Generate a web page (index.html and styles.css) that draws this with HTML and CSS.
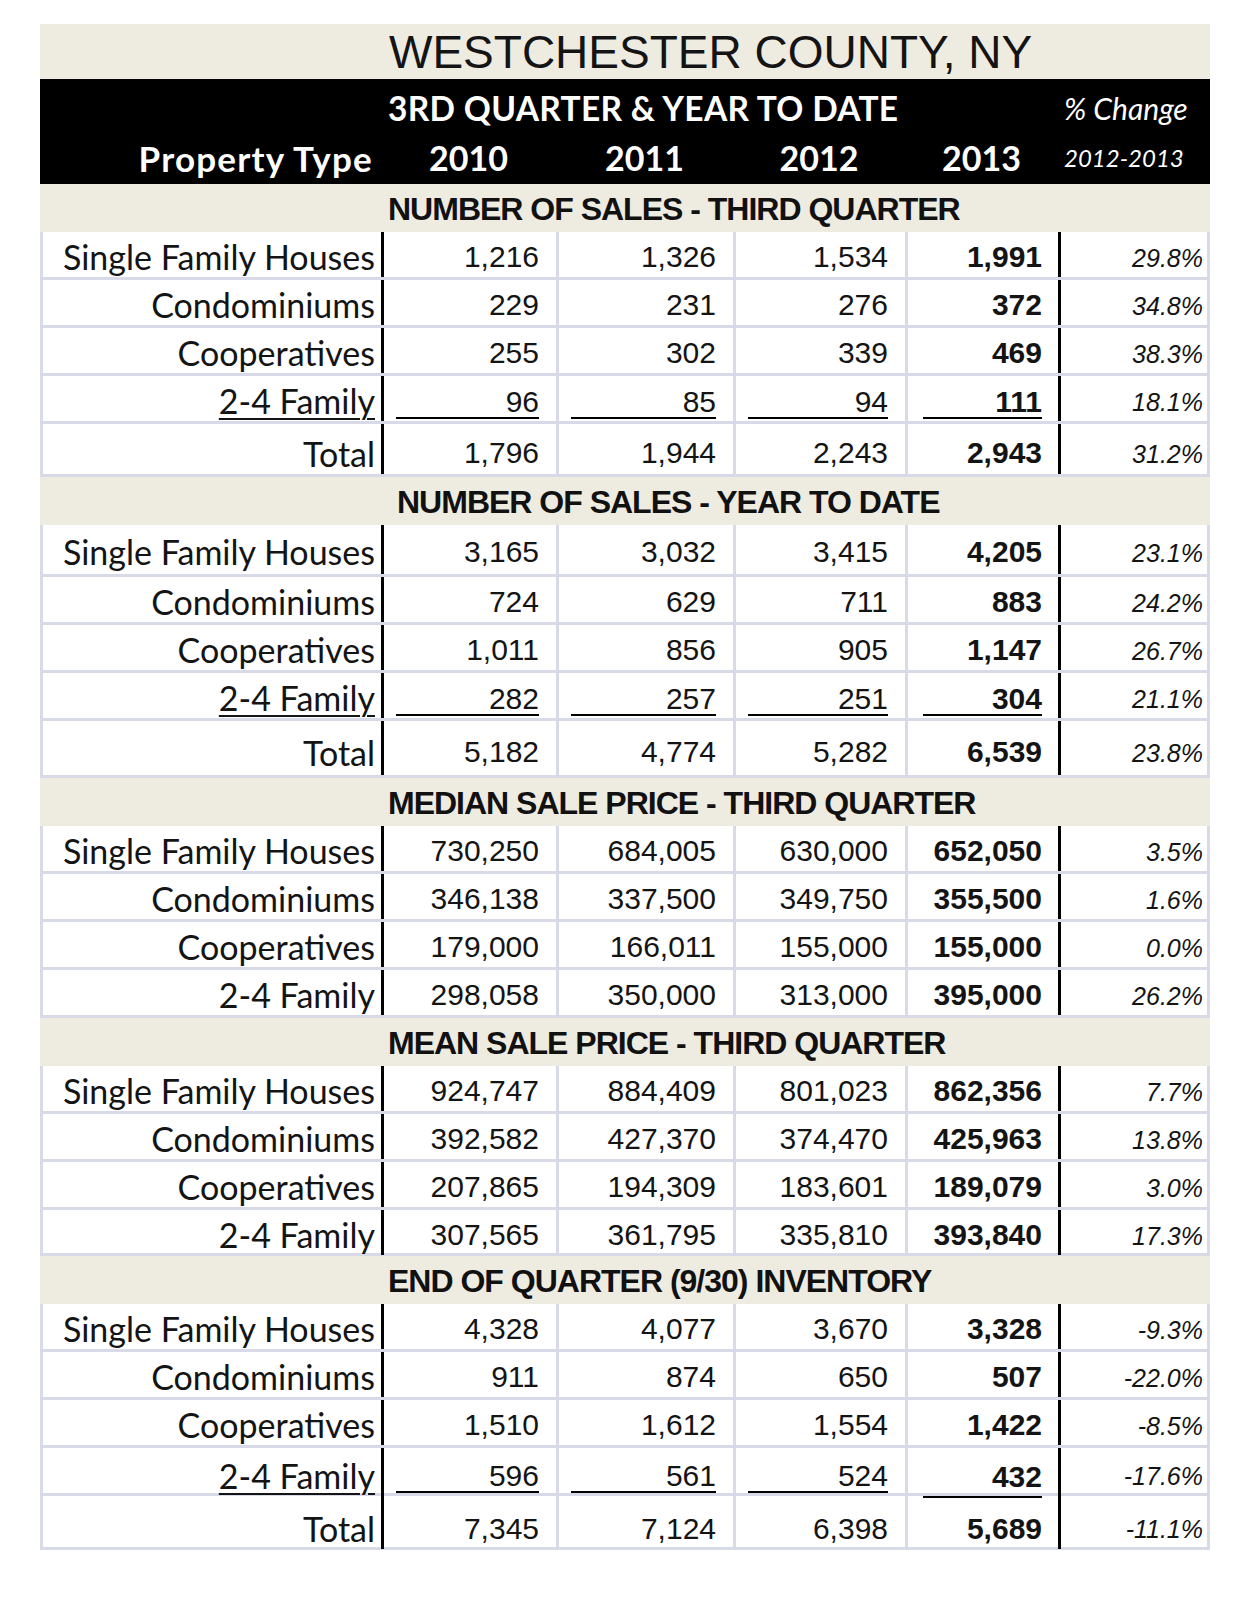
FILE: index.html
```html
<!DOCTYPE html>
<html>
<head>
<meta charset="utf-8">
<link rel="stylesheet" href="styles.css">
</head>
<body>
<div class="sheet">
  <div class="title-row grid"><div class="title">WESTCHESTER COUNTY, NY</div></div>
  <div class="head grid">
    <div class="h-span">3RD QUARTER &amp; YEAR TO DATE</div>
    <div class="h-chg">% Change</div>
    <div class="h-prop">Property Type</div>
    <div class="h-yr">2010</div>
    <div class="h-yr">2011</div>
    <div class="h-yr">2012</div>
    <div class="h-yr">2013</div>
    <div class="h-rng">2012-2013</div>
  </div>

  <div class="band grid"><div class="band-t">NUMBER OF SALES - THIRD QUARTER</div></div>
  <div class="row grid"><div class="lab">Single Family Houses</div><div class="n c1">1,216</div><div class="n c2">1,326</div><div class="n c3">1,534</div><div class="n c4 b">1,991</div><div class="p">29.8%</div></div>
  <div class="row grid"><div class="lab">Condominiums</div><div class="n c1">229</div><div class="n c2">231</div><div class="n c3">276</div><div class="n c4 b">372</div><div class="p">34.8%</div></div>
  <div class="row grid"><div class="lab">Cooperatives</div><div class="n c1">255</div><div class="n c2">302</div><div class="n c3">339</div><div class="n c4 b">469</div><div class="p">38.3%</div></div>
  <div class="row grid ul"><div class="lab"><u>2-4 Family</u></div><div class="n c1"><span class="line">96</span></div><div class="n c2"><span class="line">85</span></div><div class="n c3"><span class="line">94</span></div><div class="n c4 b"><span class="line">111</span></div><div class="p">18.1%</div></div>
  <div class="row grid tot"><div class="lab">Total</div><div class="n c1">1,796</div><div class="n c2">1,944</div><div class="n c3">2,243</div><div class="n c4 b">2,943</div><div class="p">31.2%</div></div>

  <div class="band grid"><div class="band-t shift">NUMBER OF SALES - YEAR TO DATE</div></div>
  <div class="row grid tall"><div class="lab">Single Family Houses</div><div class="n c1">3,165</div><div class="n c2">3,032</div><div class="n c3">3,415</div><div class="n c4 b">4,205</div><div class="p">23.1%</div></div>
  <div class="row grid"><div class="lab">Condominiums</div><div class="n c1">724</div><div class="n c2">629</div><div class="n c3">711</div><div class="n c4 b">883</div><div class="p">24.2%</div></div>
  <div class="row grid"><div class="lab">Cooperatives</div><div class="n c1">1,011</div><div class="n c2">856</div><div class="n c3">905</div><div class="n c4 b">1,147</div><div class="p">26.7%</div></div>
  <div class="row grid ul"><div class="lab"><u>2-4 Family</u></div><div class="n c1"><span class="line">282</span></div><div class="n c2"><span class="line">257</span></div><div class="n c3"><span class="line">251</span></div><div class="n c4 b"><span class="line">304</span></div><div class="p">21.1%</div></div>
  <div class="row grid tot tot2"><div class="lab">Total</div><div class="n c1">5,182</div><div class="n c2">4,774</div><div class="n c3">5,282</div><div class="n c4 b">6,539</div><div class="p">23.8%</div></div>

  <div class="band grid"><div class="band-t">MEDIAN SALE PRICE - THIRD QUARTER</div></div>
  <div class="row grid"><div class="lab">Single Family Houses</div><div class="n c1">730,250</div><div class="n c2">684,005</div><div class="n c3">630,000</div><div class="n c4 b">652,050</div><div class="p">3.5%</div></div>
  <div class="row grid"><div class="lab">Condominiums</div><div class="n c1">346,138</div><div class="n c2">337,500</div><div class="n c3">349,750</div><div class="n c4 b">355,500</div><div class="p">1.6%</div></div>
  <div class="row grid"><div class="lab">Cooperatives</div><div class="n c1">179,000</div><div class="n c2">166,011</div><div class="n c3">155,000</div><div class="n c4 b">155,000</div><div class="p">0.0%</div></div>
  <div class="row grid"><div class="lab">2-4 Family</div><div class="n c1">298,058</div><div class="n c2">350,000</div><div class="n c3">313,000</div><div class="n c4 b">395,000</div><div class="p">26.2%</div></div>

  <div class="band grid"><div class="band-t">MEAN SALE PRICE - THIRD QUARTER</div></div>
  <div class="row grid"><div class="lab">Single Family Houses</div><div class="n c1">924,747</div><div class="n c2">884,409</div><div class="n c3">801,023</div><div class="n c4 b">862,356</div><div class="p">7.7%</div></div>
  <div class="row grid"><div class="lab">Condominiums</div><div class="n c1">392,582</div><div class="n c2">427,370</div><div class="n c3">374,470</div><div class="n c4 b">425,963</div><div class="p">13.8%</div></div>
  <div class="row grid"><div class="lab">Cooperatives</div><div class="n c1">207,865</div><div class="n c2">194,309</div><div class="n c3">183,601</div><div class="n c4 b">189,079</div><div class="p">3.0%</div></div>
  <div class="row grid short"><div class="lab">2-4 Family</div><div class="n c1">307,565</div><div class="n c2">361,795</div><div class="n c3">335,810</div><div class="n c4 b">393,840</div><div class="p">17.3%</div></div>

  <div class="band grid"><div class="band-t">END OF QUARTER (9/30) INVENTORY</div></div>
  <div class="row grid"><div class="lab">Single Family Houses</div><div class="n c1">4,328</div><div class="n c2">4,077</div><div class="n c3">3,670</div><div class="n c4 b">3,328</div><div class="p">-9.3%</div></div>
  <div class="row grid"><div class="lab">Condominiums</div><div class="n c1">911</div><div class="n c2">874</div><div class="n c3">650</div><div class="n c4 b">507</div><div class="p">-22.0%</div></div>
  <div class="row grid"><div class="lab">Cooperatives</div><div class="n c1">1,510</div><div class="n c2">1,612</div><div class="n c3">1,554</div><div class="n c4 b">1,422</div><div class="p">-8.5%</div></div>
  <div class="row grid ul"><div class="lab"><u>2-4 Family</u></div><div class="n c1"><span class="line">596</span></div><div class="n c2"><span class="line">561</span></div><div class="n c3"><span class="line">524</span></div><div class="n c4 b"><span class="line low">432</span></div><div class="p">-17.6%</div></div>
  <div class="row grid tot tot3"><div class="lab">Total</div><div class="n c1">7,345</div><div class="n c2">7,124</div><div class="n c3">6,398</div><div class="n c4 b">5,689</div><div class="p">-11.1%</div></div>
</div>
</body>
</html>
```

FILE: styles.css
```css
* { box-sizing: border-box; }
body { margin: 0; background: #ffffff; color: #111111; }

.sheet { width: 1170px; margin: 24px 0 0 40px; }

.grid {
  display: grid;
  grid-template-columns: 341px 175px 177px 172px 153px 152px;
}

.title-row { background: #eeece1; height: 55px; align-items: center; }
.title {
  grid-column: 2 / 7;
  padding-left: 8px;
  font-family: "Liberation Sans", Arial, sans-serif;
  font-size: 46px;
  line-height: 1;
  letter-spacing: 0;
  color: #141414;
}

.head {
  background: #000000;
  color: #ffffff;
  height: 105px;
  grid-template-rows: 52px 53px;
  align-items: center;
  font-family: Lato, "Open Sans", sans-serif;
  font-weight: 700;
  box-shadow: -2px 8px 0 -6px #000;
}
.h-span { grid-column: 2 / 6; padding-left: 7px; font-size: 33.5px; letter-spacing: 0.3px; padding-top: 6px; }
.h-chg { font-style: italic; font-weight: 400; font-size: 30px; padding-left: 6px; padding-top: 6px; }
.h-prop { text-align: right; padding-right: 8px; font-size: 35px; letter-spacing: 1.2px; }
.h-yr { text-align: center; font-size: 34px; }
.h-rng { font-style: italic; font-weight: 400; font-size: 24px; padding-left: 6px; }

.band { background: #eeece1; height: 48px; align-items: center; }
.band-t {
  grid-column: 2 / 7;
  padding-left: 7px;
  padding-top: 2px;
  font-family: "Liberation Sans", Arial, sans-serif;
  font-weight: 700;
  font-size: 32px;
  letter-spacing: -1px;
  line-height: 1;
  color: #111;
}
.band-t.shift { padding-left: 16px; }

.row {
  height: 48px;
  background: #ffffff;
  border-bottom: 3px solid #d8dae8;
  border-left: 3px solid #d8dae8;
  border-right: 3px solid #d8dae8;
  align-items: center;
}
.row.tall { height: 52px; }
.row.short { height: 46px; }
.row.tot { height: 53px; }
.row.tot2 { height: 57px; }
.row.tot3 { height: 54px; }
.row > div { height: 100%; display: flex; align-items: center; padding-top: 4px; }
.row.tot > div { padding-top: 8px; }
.row.tot3 > div { padding-top: 12px; }

.lab {
  justify-content: flex-end;
  padding-right: 6px;
  border-right: 3px solid #000;
  font-family: Lato, "Open Sans", sans-serif;
  font-size: 34px;
  color: #141414;
}
.lab u { text-decoration-thickness: 2px; text-underline-offset: 4px; }

.n {
  justify-content: flex-end;
  padding-right: 17px;
  font-family: "Liberation Sans", Arial, sans-serif;
  font-size: 30px;
  color: #141414;
  border-right: 3px solid #d8dae8;
}
.n.c1 { padding-left: 12px; }
.n.c2 { padding-left: 12px; }
.n.c3 { padding-left: 12px; }
.n.c4 { padding-left: 15px; padding-right: 16px; border-right: 3px solid #000; }
.n.b { font-weight: 700; }

.line {
  flex: 1;
  text-align: right;
  border-bottom: 2px solid #000;
  line-height: 30px;
  padding-bottom: 0;
  margin-top: 4px;
}
.line.low { padding-bottom: 4px; margin-top: 10px; }

.p {
  justify-content: flex-end;
  padding-right: 10px;
  font-family: "Liberation Sans", Arial, sans-serif;
  font-style: italic;
  font-size: 25px;
  color: #141414;
}
.row > .p { padding-top: 7px; }
.row.tot > .p { padding-top: 10px; }
.row.tot3 > .p { padding-top: 14px; }
```
